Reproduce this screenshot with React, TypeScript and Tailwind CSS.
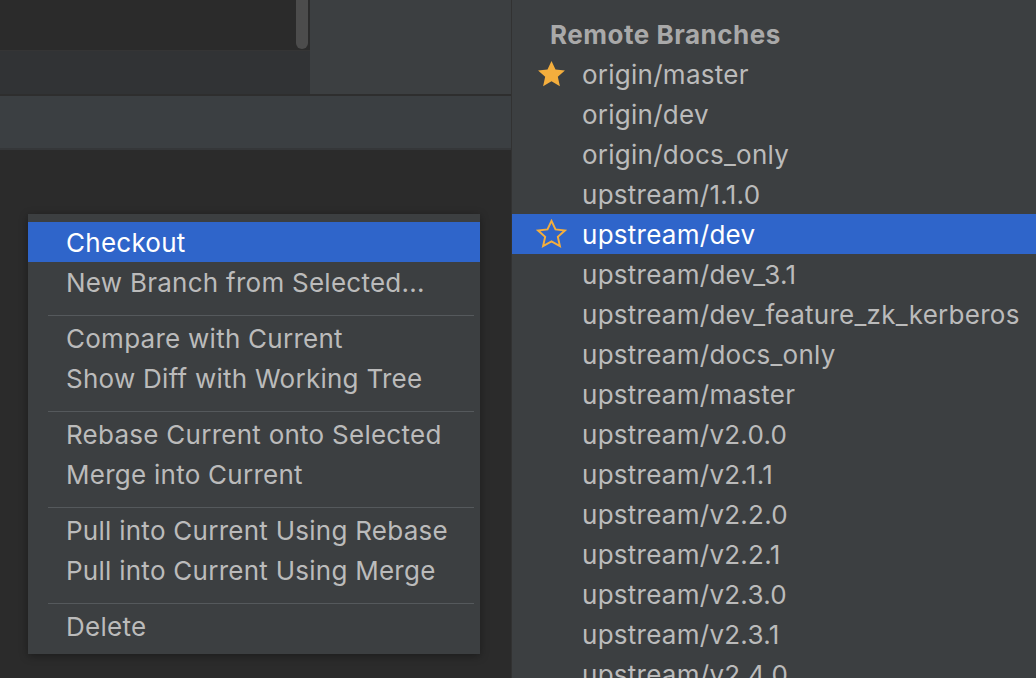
import React from "react";

const STAR = "12,1.5 15.1,8.1 22.4,8.9 16.9,13.8 18.5,21 12,17.3 5.5,21 7.1,13.8 1.6,8.9 8.9,8.1";

const Star = ({ filled }: { filled: boolean }) => (
  <svg width="31" height="31" viewBox="0 0 24 24" className="shrink-0">
    {filled ? (
      <polygon points={STAR} fill="#f4ae3d" />
    ) : (
      <polygon
        points={STAR}
        fill="none"
        stroke="#f4ae3d"
        strokeWidth="1.5"
        strokeLinejoin="miter"
      />
    )}
  </svg>
);

const menuGroups = [
  ["Checkout", "New Branch from Selected..."],
  ["Compare with Current", "Show Diff with Working Tree"],
  ["Rebase Current onto Selected", "Merge into Current"],
  ["Pull into Current Using Rebase", "Pull into Current Using Merge"],
  ["Delete"],
];

const branches = [
  { name: "origin/master", star: "filled" },
  { name: "origin/dev" },
  { name: "origin/docs_only" },
  { name: "upstream/1.1.0" },
  { name: "upstream/dev", star: "outline", selected: true },
  { name: "upstream/dev_3.1" },
  { name: "upstream/dev_feature_zk_kerberos" },
  { name: "upstream/docs_only" },
  { name: "upstream/master" },
  { name: "upstream/v2.0.0" },
  { name: "upstream/v2.1.1" },
  { name: "upstream/v2.2.0" },
  { name: "upstream/v2.2.1" },
  { name: "upstream/v2.3.0" },
  { name: "upstream/v2.3.1" },
  { name: "upstream/v2.4.0" },
];

const ContextMenu = () => (
  <div className="absolute left-[28px] top-[214px] w-[452px] bg-[#3c3f41] py-[8px] shadow-[0_2px_8px_rgba(0,0,0,0.35)]">
    {menuGroups.map((group, gi) => (
      <div key={gi}>
        {gi > 0 && (
          <div className="pt-[13px] pb-[2px] pl-[20px] pr-[6px]">
            <div className="h-px w-full bg-[#55595c]" />
          </div>
        )}
        {group.map((item) => (
          <div
            key={item}
            className={`h-[40px] flex items-center pl-[38px] pt-[1px] text-[26px] leading-none tracking-[0.01em] ${
              item === "Checkout" ? "bg-[#2f65ca] text-white" : "text-[#bbbbbb]"
            }`}
          >
            {item}
          </div>
        ))}
      </div>
    ))}
  </div>
);

export default function App() {
  return (
    <div
      className="relative flex h-[678px] w-[1036px] overflow-hidden bg-[#2b2b2b]"
      style={{ fontFamily: "Inter, 'Noto Sans', sans-serif" }}
    >
      {/* left side */}
      <div className="flex w-[511px] shrink-0 flex-col">
        <div className="flex h-[94px]">
          <div className="flex w-[310px] flex-col">
            <div className="flex h-[50px] justify-end bg-[#2b2b2b] pr-[2px]">
              <div className="h-[49px] w-[12px] rounded-b-full bg-[#4c4c4c]" />
            </div>
            <div className="h-px bg-[#353535]" />
            <div className="flex-1 bg-[#313335]" />
          </div>
          <div className="flex-1 bg-[#3c3f41]" />
        </div>
        <div className="h-[2px] bg-[#2e2e2e]" />
        <div className="h-[52px] bg-[#3b3f42]" />
        <div className="h-[2px] bg-[#353739]" />
        <div className="flex-1 bg-[#2b2b2b]" />
      </div>

      {/* remote branches */}
      <div className="flex-1 border-l border-[#323232] bg-[#3c3f41] pt-[14px]">
        <div className="flex h-[40px] items-center pl-[38px] pt-[1px] text-[26px] leading-none font-bold tracking-[0.02em] text-[#a9a9a9]">
          Remote Branches
        </div>
        {branches.map((b) => (
          <div
            key={b.name}
            className={`flex h-[40px] items-center gap-[15px] pl-[24px] text-[26px] leading-none tracking-[0.01em] ${
              b.selected ? "bg-[#2f65ca] text-white" : "text-[#bbbbbb]"
            }`}
          >
            {b.star ? <Star filled={b.star === "filled"} /> : <div className="w-[31px] shrink-0" />}
            <span className="pt-[1px]">{b.name}</span>
          </div>
        ))}
      </div>

      <ContextMenu />
    </div>
  );
}
